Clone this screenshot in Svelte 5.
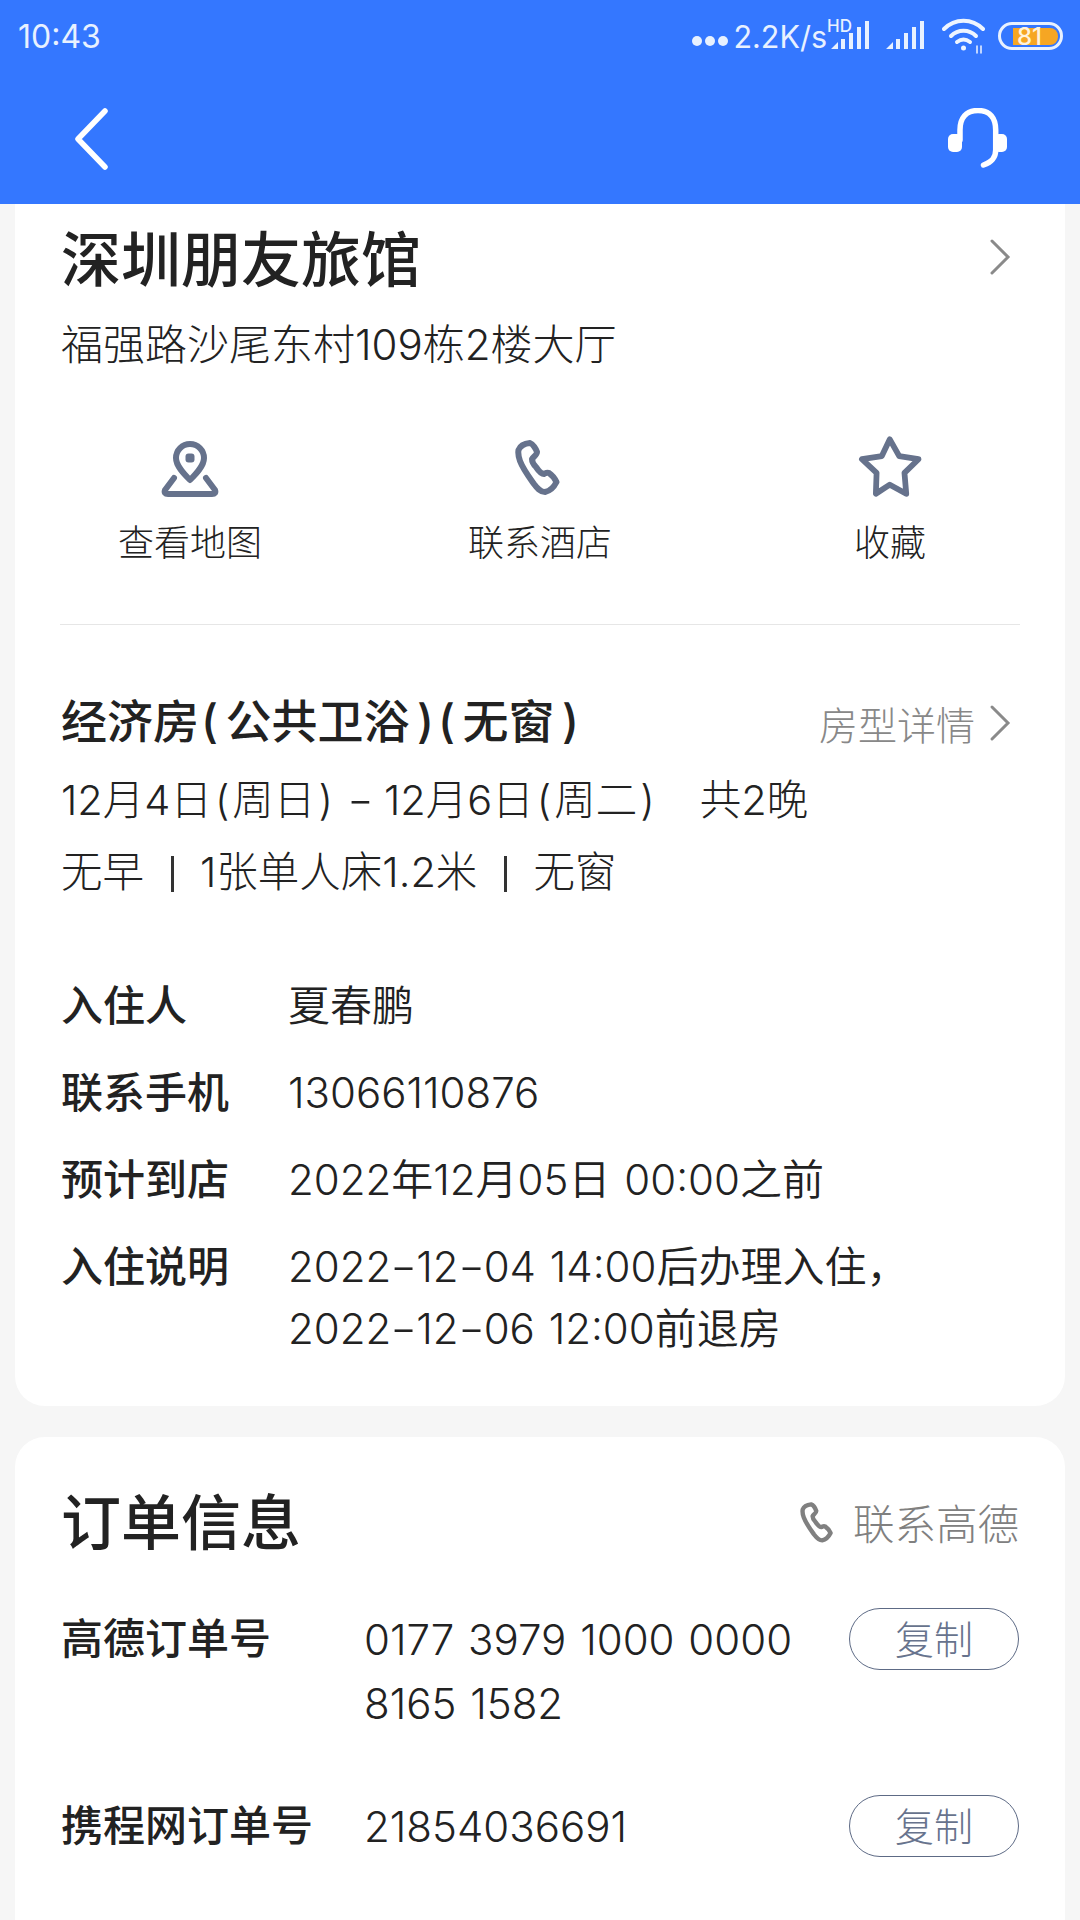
<script>
    const infoRows = [
        { label: '入住人', lines: ['夏春鹏'] },
        { label: '联系手机', lines: ['13066110876'] },
        { label: '预计到店', lines: ['2022年12月05日 00:00之前'] },
        { label: '入住说明', lines: ['2022-12-04 14:00后办理入住，', '2022-12-06 12:00前退房'] }
    ];
    const orderRows = [
        { label: '高德订单号', lines: ['0177 3979 1000 0000', '8165 1582'] },
        { label: '携程网订单号', lines: ['21854036691'] }
    ];
    const phonePath = 'M18.500 23C20 19 25 16.500 30 16C33 17 36 22 37 25C37 28 33 30 32 32C32 36 34 38 36 40C38 43 41 47 44 47C46 46 47 45 49 46C52 48 55 52 56.500 55C54 60 50 64 45 65C40 65 37 61 34 57C29 50 23 42 20 34C18.500 30 18 26 18.500 23Z';
</script>

<div class="page">
    <header class="header">
        <div class="status">
            <span class="time">10:43</span>
            <div class="status-right">
                <span class="dots"><i></i><i></i><i></i></span>
                <span class="speed">2.2K/s</span>
                <div class="hd">
                    <span class="hd-text">HD</span>
                    <svg width="40" height="30" viewBox="0 0 40 30">
                        <path d="M0 28L7 21V28ZM10 18H14V28H10ZM18 12H22V28H18ZM26 6H30V28H26ZM34 0H38V28H34Z" fill="#e8f1ff" />
                    </svg>
                </div>
                <svg class="sig" width="40" height="30" viewBox="0 0 40 30">
                    <path d="M0 28L7 21V28ZM10 18H14V28H10ZM18 12H22V28H18ZM26 6H30V28H26ZM34 0H38V28H34Z" fill="#e8f1ff" />
                </svg>
                <svg class="wifi" width="44" height="36" viewBox="0 0 44 36" fill="none" stroke="#eef5ff" stroke-width="4" stroke-linecap="round">
                    <path d="M2 11C13 0 30 0 41 11" />
                    <path d="M9 18C16 11 27 11 34 18" />
                    <path d="M15 24C19 21 24 21 28 24" />
                    <circle cx="21.500" cy="30" r="2.500" fill="#eef5ff" stroke="none" />
                    <path d="M35 28V35M39 28V35" stroke-width="1.500" />
                </svg>
                <div class="battery">
                    <span class="battery-level">81</span>
                </div>
            </div>
        </div>
        <nav class="nav">
            <svg width="36" height="62" viewBox="0 0 36 62" fill="none" stroke="#fff" stroke-width="5.500" stroke-linecap="round" stroke-linejoin="round">
                <path d="M32 3L5 31L32 59" />
            </svg>
            <svg width="63" height="60" viewBox="16 13 63 60" fill="none">
                <path d="M30 45V35C30 23 36 15.500 48 15.500C60 15.500 65.700 23 65.700 35V55C65.700 63 62 67 53.500 70" stroke="#fff" stroke-width="5.500" stroke-linecap="round" />
                <rect x="18" y="39" width="14" height="18" rx="5" fill="#fff" />
                <rect x="64" y="39" width="13" height="18" rx="5" fill="#fff" />
            </svg>
        </nav>
    </header>

    <main class="content">
        <section class="card hotel">
            <div class="hotel-title">
                <h1>深圳朋友旅馆</h1>
                <svg class="chevron" width="22" height="38" viewBox="0 0 22 38" fill="none" stroke="#8a8a8a" stroke-width="3" stroke-linecap="round"><path d="M3 3L19 19L3 35" /></svg>
            </div>
            <p class="address">福强路沙尾东村109栋2楼大厅</p>

            <div class="actions">
                <div class="action">
                    <svg width="58" height="60" viewBox="11 10 58 60" fill="none" stroke="#66728c" stroke-width="6" stroke-linejoin="round" stroke-linecap="round">
                        <path d="M40 17A14 14 0 0 1 54 31C54 39 46 47 40 53C34 47 26 39 26 31A14 14 0 0 1 40 17Z" />
                        <rect x="35.500" y="26.500" width="9" height="9" rx="3" fill="#66728c" stroke="none" />
                        <path d="M24 51L15 63Q13.500 67 18 67H62Q66.500 67 65 63L56 51" />
                    </svg>
                    <span>查看地图</span>
                </div>
                <div class="action">
                    <svg class="phone" width="46" height="60" viewBox="15 10 46 60" fill="none" stroke="#66728c" stroke-width="6" stroke-linejoin="round"><path d={phonePath} /></svg>
                    <span>联系酒店</span>
                </div>
                <div class="action">
                    <svg class="star" width="66" height="63" viewBox="8 9 63 60" fill="none" stroke="#66728c" stroke-width="5.500" stroke-linejoin="round">
                        <path d="M39.300 14L48.300 30L66.700 33L53.300 46L55 66L39.300 57.300L26 66L26.700 46L12.700 33L31.700 30Z" />
                    </svg>
                    <span>收藏</span>
                </div>
            </div>

            <div class="divider"></div>

            <div class="room-head">
                <h2>经济房<span class="open">(</span>公共卫浴<span class="close">)</span><span class="open">(</span>无窗<span class="close">)</span></h2>
                <div class="room-link">
                    <span>房型详情</span>
                    <svg width="22" height="38" viewBox="0 0 22 38" fill="none" stroke="#8a8a8a" stroke-width="3" stroke-linecap="round"><path d="M3 3L19 19L3 35" /></svg>
                </div>
            </div>
            <p class="room-line first">12月4日<span class="paren">(</span>周日<span class="paren">)</span> <span class="dash">-</span> 12月6日<span class="paren">(</span>周二<span class="paren">)</span><span class="nights">共2晚</span></p>
            <p class="room-line">无早<span class="sep"></span>1张单人床1.2米<span class="sep"></span>无窗</p>

            <div class="info">
                {#each infoRows as row}
                    <div class="info-row">
                        <div class="info-label">{row.label}</div>
                        <div class="info-value">
                            {#each row.lines as line}
                                <div>{#each line.split('-') as part, i}{#if i}<span class="dash">-</span>{/if}{part}{/each}</div>
                            {/each}
                        </div>
                    </div>
                {/each}
            </div>
        </section>

        <section class="card order">
            <div class="order-head">
                <h1>订单信息</h1>
                <div class="contact">
                    <svg width="36" height="44" viewBox="15 10 46 60" fill="none" stroke="#808080" stroke-width="6" stroke-linejoin="round"><path d={phonePath} /></svg>
                    <span>联系高德</span>
                </div>
            </div>
            {#each orderRows as row}
                <div class="order-row">
                    <div class="order-label">{row.label}</div>
                    <div class="order-value">
                        {#each row.lines as line}
                            <div>{line}</div>
                        {/each}
                    </div>
                    <button class="copy">复制</button>
                </div>
            {/each}
        </section>
    </main>
</div>

<style>
    :global(body) {
        margin: 0;
        background: #f6f6f6;
    }
    .page {
        width: 1080px;
        height: 1920px;
        overflow: hidden;
        background: #f6f6f6;
        font-family: Inter, "Noto Sans CJK SC", sans-serif;
        color: #222;
    }
    .header {
        background: #3477ff;
        height: 204px;
    }
    .status {
        height: 72px;
        display: flex;
        justify-content: space-between;
        align-items: center;
        padding: 0 17px 0 18px;
        color: #e8f1ff;
    }
    .time {
        font-size: 32px;
    }
    .status-right {
        display: flex;
        align-items: center;
    }
    .dots {
        display: flex;
        gap: 3px;
        margin-top: 10px;
        margin-right: 5px;
    }
    .dots i {
        width: 10px;
        height: 10px;
        border-radius: 50%;
        background: #e8f1ff;
    }
    .speed {
        font-size: 30.500px;
    }
    .hd {
        position: relative;
        margin-left: 4px;
        display: flex;
    }
    .hd-text {
        position: absolute;
        left: -4px;
        top: -3px;
        font-size: 17px;
        line-height: 17px;
        font-weight: 500;
    }
    .sig {
        margin-left: 15px;
    }
    .wifi {
        margin-left: 16px;
    }
    .battery {
        margin-left: 12px;
        width: 65px;
        height: 28px;
        box-sizing: border-box;
        border: 3px solid #e8f1ff;
        border-radius: 14px;
        padding: 3px 2px 2px 12px;
    }
    .battery-level {
        display: block;
        height: 100%;
        background: #f6a623;
        border-radius: 0 8px 8px 0;
        font-size: 24px;
        line-height: 17px;
        padding-left: 4px;
        color: #fff3dd;
        font-weight: 500;
    }
    .nav {
        height: 132px;
        display: flex;
        justify-content: space-between;
        align-items: flex-start;
        padding: 36px 71px 0 73px;
    }
    .content {
        padding: 0 15px;
    }
    .card {
        background: #fff;
        box-sizing: border-box;
        padding: 0 46px;
    }
    .hotel {
        border-radius: 0 0 30px 30px;
        height: 1202px;
    }
    .order {
        margin-top: 31px;
        border-radius: 30px 30px 0 0;
        height: 700px;
    }
    h1 {
        margin: 0;
        font-size: 60px;
        font-weight: 500;
        line-height: 80px;
    }
    .hotel-title {
        display: flex;
        justify-content: space-between;
        align-items: center;
        padding-top: 16px;
    }
    .chevron {
        margin: 0 8px 6px 0;
    }
    .address {
        margin: 20px 0 0;
        font-size: 42px;
        font-weight: 300;
        line-height: 50px;
    }
    .actions {
        display: grid;
        grid-template-columns: repeat(3, 350px);
        margin: 67px 0 0 -46px;
    }
    .action {
        display: flex;
        flex-direction: column;
        align-items: center;
        gap: 21px;
    }
    .action span {
        font-size: 36px;
        font-weight: 300;
        line-height: 50px;
    }
    .phone {
        margin-left: -4px;
    }
    .star {
        margin-top: -3px;
    }
    .divider {
        height: 1px;
        background: #e6e6e6;
        margin: 56px -1px 0;
    }
    .room-head {
        display: flex;
        justify-content: space-between;
        align-items: flex-start;
        margin-top: 69px;
    }
    h2 {
        margin: 0;
        font-size: 46px;
        font-weight: 500;
        line-height: 54px;
    }
    .open {
        padding: 0 7.500px 0 2px;
    }
    .close {
        padding: 0 2px 0 7.500px;
    }
    .paren {
        padding: 0 3px;
    }
    .dash {
        display: inline-block;
        margin: 0 3px;
        transform: scaleX(1.4);
    }
    .room-link {
        display: flex;
        align-items: center;
        gap: 14px;
        height: 58px;
        font-size: 39px;
        font-weight: 300;
        color: #888;
        padding-right: 8px;
    }
    .room-line {
        margin: 22px 0 0;
        font-size: 41.500px;
        font-weight: 300;
        line-height: 50px;
    }
    .room-line.first {
        margin-top: 23px;
    }
    .nights {
        margin-left: 42px;
    }
    .sep {
        display: inline-block;
        width: 3px;
        height: 36px;
        background: #333;
        margin: 0 26.500px;
        vertical-align: -5px;
    }
    .info {
        margin-top: 78px;
    }
    .info-row {
        display: flex;
        margin-bottom: 25px;
    }
    .info-label {
        width: 227px;
        flex: none;
        font-size: 42px;
        font-weight: 500;
        line-height: 62px;
    }
    .info-value {
        font-size: 42px;
        font-weight: 350;
        line-height: 62px;
        word-spacing: 2px;
    }
    .order-head {
        display: flex;
        justify-content: space-between;
        align-items: center;
        padding-top: 46px;
    }
    .contact {
        display: flex;
        align-items: center;
        gap: 18px;
        font-size: 41.500px;
        font-weight: 300;
        color: #808080;
        margin-bottom: 2px;
    }
    .order-row {
        display: flex;
        align-items: flex-start;
        margin-top: 45px;
    }
    .order-row + .order-row {
        margin-top: 60px;
    }
    .order-label {
        width: 303px;
        flex: none;
        font-size: 42px;
        font-weight: 500;
        line-height: 62px;
    }
    .order-value {
        flex: 1;
        font-size: 42px;
        font-weight: 350;
        line-height: 63.500px;
        word-spacing: 2px;
    }
    .copy {
        width: 170px;
        height: 62px;
        box-sizing: border-box;
        border: 1.5px solid #5d6a85;
        border-radius: 31px;
        background: #fff;
        color: #67738d;
        font-family: inherit;
        font-size: 39px;
        font-weight: 300;
        line-height: 1;
        padding: 0;
    }
</style>
